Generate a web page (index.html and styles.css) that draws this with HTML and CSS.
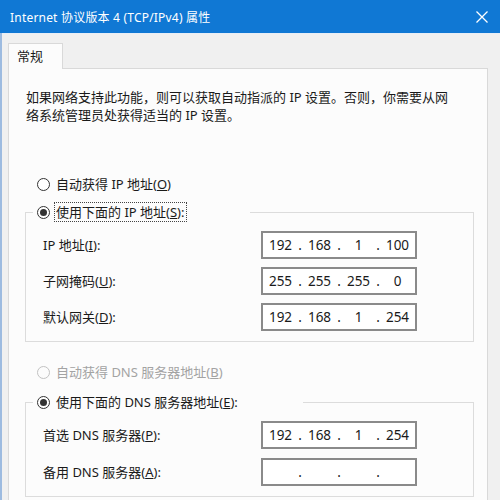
FILE: index.html
```html
<!DOCTYPE html>
<html lang="zh-CN">
<head>
<meta charset="utf-8">
<title>Internet 协议版本 4 (TCP/IPv4) 属性</title>
<link rel="stylesheet" href="styles.css">
</head>
<body>
<div class="window">
  <div class="titlebar">
    <span class="title">Internet 协议版本 4 (TCP/IPv4) 属性</span>
    <svg class="close" width="12" height="12" viewBox="0 0 12 12"><path d="M0.5 0.5 L11.5 11.5 M11.5 0.5 L0.5 11.5" stroke="#ffffff" stroke-width="1.3" fill="none"/></svg>
  </div>
  <div class="content">
    <div class="tabs"><div class="tab">常规</div></div>
    <div class="panel">
      <p class="intro">如果网络支持此功能，则可以获取自动指派的 IP 设置。否则，你需要从网<br>络系统管理员处获得适当的 IP 设置。</p>

      <div class="radio-row">
        <span class="radio"></span><span class="rlabel">自动获得 IP 地址(<u>O</u>)</span>
      </div>

      <div class="group group-ip">
        <div class="head head-ip">
          <span class="radio checked"></span><span class="rlabel focus">使用下面的 IP 地址(<u>S</u>):</span>
        </div>
        <div class="fields">
          <span class="flabel">IP 地址(<u>I</u>):</span>
          <div class="ip"><span class="seg">192</span><span class="dot">.</span><span class="seg">168</span><span class="dot">.</span><span class="seg">1</span><span class="dot">.</span><span class="seg">100</span></div>
          <span class="flabel">子网掩码(<u>U</u>):</span>
          <div class="ip"><span class="seg">255</span><span class="dot">.</span><span class="seg">255</span><span class="dot">.</span><span class="seg">255</span><span class="dot">.</span><span class="seg">0</span></div>
          <span class="flabel">默认网关(<u>D</u>):</span>
          <div class="ip"><span class="seg">192</span><span class="dot">.</span><span class="seg">168</span><span class="dot">.</span><span class="seg">1</span><span class="dot">.</span><span class="seg">254</span></div>
        </div>
      </div>

      <div class="radio-row radio-row-dns disabled">
        <span class="radio"></span><span class="rlabel">自动获得 DNS 服务器地址(<u>B</u>)</span>
      </div>

      <div class="group group-dns">
        <div class="head head-dns">
          <span class="radio checked"></span><span class="rlabel">使用下面的 DNS 服务器地址(<u>E</u>):</span>
        </div>
        <div class="fields">
          <span class="flabel">首选 DNS 服务器(<u>P</u>):</span>
          <div class="ip"><span class="seg">192</span><span class="dot">.</span><span class="seg">168</span><span class="dot">.</span><span class="seg">1</span><span class="dot">.</span><span class="seg">254</span></div>
          <span class="flabel">备用 DNS 服务器(<u>A</u>):</span>
          <div class="ip"><span class="seg"></span><span class="dot">.</span><span class="seg"></span><span class="dot">.</span><span class="seg"></span><span class="dot">.</span><span class="seg"></span></div>
        </div>
      </div>
    </div>
  </div>
</div>
</body>
</html>
```

FILE: styles.css
```css
* { box-sizing: border-box; }

html, body {
  margin: 0;
  padding: 0;
  width: 500px;
  height: 500px;
  overflow: hidden;
  background: #f0f0f0;
}

body {
  font-family: "Noto Sans", "Noto Sans CJK SC", sans-serif;
  font-size: 13px;
  color: #1a1a1a;
}

.window {
  width: 500px;
  height: 500px;
  display: flex;
  flex-direction: column;
  border-left: 2px solid #9dbbe0;
  background: #f0f0f0;
}

.titlebar {
  height: 33px;
  flex: none;
  background: #1078d4;
  display: flex;
  align-items: center;
  justify-content: space-between;
  padding: 0 12px 0 10px;
  margin-left: -2px;
}

.title {
  color: #ffffff;
  font-size: 12px;
  letter-spacing: 0.2px;
}

.close {
  display: block;
}

.content {
  flex: 1;
  padding: 0 0 0 6px;
  border-top: 1px solid #e8eef6;
}

.tabs {
  display: flex;
  padding-top: 9px;
}

.tab {
  position: relative;
  height: 26px;
  margin-bottom: -1px;
  padding: 3px 19px 0 8px;
  background: #fcfcfc;
  border: 1px solid #d9d9d9;
  border-bottom: none;
  font-size: 13px;
  line-height: 18px;
}

.panel {
  width: 480px;
  height: 440px;
  background: #fcfcfc;
  border: 1px solid #d9d9d9;
  padding: 19px 13px 0 16px;
}

.intro {
  margin: 0;
  padding-left: 1px;
  line-height: 18px;
}

.radio-row {
  display: flex;
  align-items: center;
  height: 20px;
  margin-top: 50px;
  padding-left: 12px;
}

.radio-row-dns {
  margin-top: 20px;
}

.radio {
  width: 13px;
  height: 13px;
  flex: none;
  border: 1px solid #333333;
  border-radius: 50%;
  background: #ffffff;
  margin-right: 4px;
  display: flex;
  align-items: center;
  justify-content: center;
}

.radio.checked::after {
  content: "";
  width: 7px;
  height: 7px;
  border-radius: 50%;
  background: #333333;
}

.disabled .radio {
  border-color: #c2c2c2;
  background: #fcfcfc;
}

.disabled .rlabel {
  color: #a3a3a3;
}

.rlabel {
  border: 1px dotted transparent;
  padding: 0 2px 0 1px;
  height: 20px;
  line-height: 18px;
  white-space: nowrap;
}

.rlabel.focus {
  border-color: #444444;
}

.group {
  width: 449px;
  border: 1px solid #dcdcdc;
  margin-top: 18px;
}

.group-dns {
  margin-top: 20px;
}

.head {
  display: flex;
  align-items: center;
  height: 20px;
  margin-top: -11px;
  margin-left: 7px;
  padding-left: 4px;
  background: #fcfcfc;
}

.head-ip { width: 217px; }
.head-dns { width: 270px; }

.fields {
  display: grid;
  grid-template-columns: 218px 156px;
  row-gap: 8px;
  padding: 9px 0 10px 17px;
  align-items: center;
}

.group-dns .fields {
  row-gap: 9px;
}

.flabel {
  white-space: nowrap;
  line-height: 18px;
}

.ip {
  display: flex;
  align-items: center;
  width: 156px;
  height: 28px;
  border: 2px solid #8a8a8a;
  background: #ffffff;
  font-size: 13.5px;
  color: #1a1a1a;
}

.seg {
  width: 35px;
  text-align: center;
}

.dot {
  width: 4px;
  text-align: center;
}
```
